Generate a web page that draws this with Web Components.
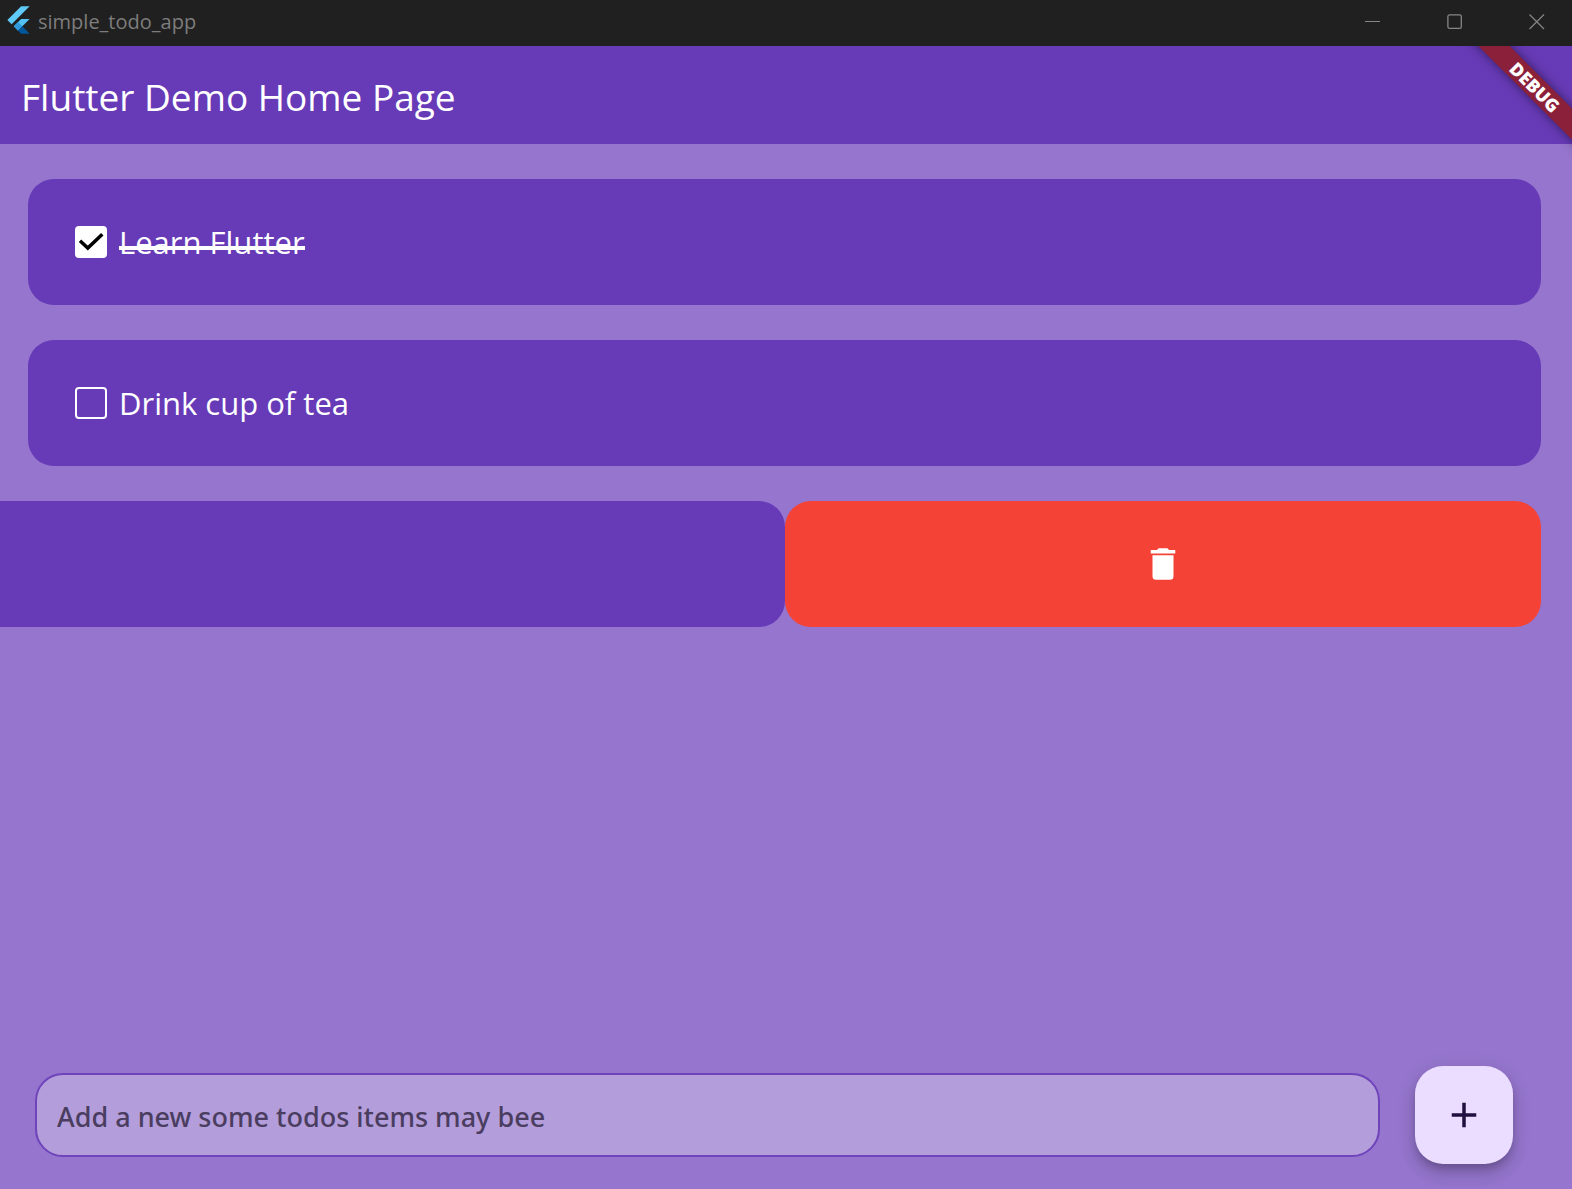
<!DOCTYPE html>
<html lang="en">
<head>
<meta charset="utf-8">
<title>simple_todo_app</title>
<style>
  html, body { height: 100%; margin: 0; }
  body {
    --deep: #673ab7;
    --light: #9575cd;
    --radius: 26px;
    font-family: "Open Sans", "Noto Sans", sans-serif;
    color: #fff;
    background: var(--light);
  }
</style>
</head>
<body>
<todo-window></todo-window>

<template id="title-bar">
  <style>
    :host { display: flex; align-items: center; height: 46px; flex: none; background: #202020; color: #7d7d7d; }
    .logo { width: 23px; height: 28px; margin: 0 8px 6px 7px; flex: none; }
    .name { flex: 1; font-size: 20px; line-height: 28px; padding-bottom: 3px; }
    nav { display: flex; margin-right: -6px; }
    button { display: grid; place-items: center; width: 82px; height: 43px; margin: 0 0 3px; padding: 0; border: 0; background: none; color: #868686; }
    svg { display: block; }
  </style>
  <svg class="logo" viewBox="2 0 20 24" aria-hidden="true">
    <path fill="#5fc9f8" d="M14.3 0 2.3 12 6 15.7 21.7 0z"/>
    <path fill="#54c1f5" d="M14.3 11.1 7.9 17.5l3.7 3.7L21.7 11.1z"/>
    <path fill="#2f9bdc" d="m7.9 17.5 3.7-3.7 3.7 3.7-3.7 3.8z"/>
    <path fill="#01579b" d="m11.6 21.3 3.7-3.8 6.4 6.5h-7.4z"/>
  </svg>
  <span class="name"><slot></slot></span>
  <nav>
    <button aria-label="Minimize"><svg width="16" height="16" viewBox="0 0 16 16"><path d="M0 7.500h15" stroke="currentColor"/></svg></button>
    <button aria-label="Maximize"><svg width="16" height="16" viewBox="0 0 16 16" fill="none"><rect x=".9" y=".9" width="13.4" height="13.4" rx="1.6" stroke="currentColor" stroke-width="1.3"/></svg></button>
    <button aria-label="Close"><svg width="16" height="16" viewBox="0 0 16 16"><path d="m.5.5 14.5 14.5M15 .5.5 15" stroke="currentColor" stroke-width="1.2"/></svg></button>
  </nav>
</template>

<template id="debug-ribbon">
  <style>
    :host { position: absolute; top: 0; right: 0; width: 120px; height: 120px; overflow: hidden; pointer-events: none; }
    span {
      position: absolute; right: -63px; top: 30px; width: 200px; height: 22px;
      transform: rotate(45deg); background: #8b203a; box-shadow: 0 0 11px rgba(0,0,0,.5);
      text-align: center; font-size: 18px; line-height: 22px; font-weight: 900;
      font-family: "Noto Sans", "Open Sans", sans-serif;
    }
  </style>
  <span><slot></slot></span>
</template>

<template id="app-header">
  <style>
    :host { display: flex; align-items: center; height: 98px; flex: none; padding: 0 21px; background: var(--deep); }
    h1 { margin: 0; padding-top: 4px; font-size: 37px; line-height: 50px; font-weight: 400; }
  </style>
  <h1><slot></slot></h1>
</template>

<template id="todo-item">
  <style>
    :host { display: flex; align-items: center; height: 126px; padding: 0 47px; box-sizing: border-box; border-radius: var(--radius); background: var(--deep); }
    label { display: flex; align-items: center; gap: 12px; font-size: 31px; line-height: 42px; }
    .box { display: grid; }
    .box > * { grid-area: 1 / 1; }
    input { appearance: none; width: 32px; height: 32px; margin: 0; border: 2px solid #fff; border-radius: 4px; }
    input:checked { background: #fff; }
    svg { width: 32px; height: 32px; visibility: hidden; pointer-events: none; }
    input:checked + svg { visibility: visible; }
    :host([done]) .text { background: linear-gradient(#fff, #fff) 0 25px / 100% 4px no-repeat; }
  </style>
  <label>
    <span class="box">
      <input type="checkbox">
      <svg viewBox="0 0 32 32" fill="none"><path d="M5 14.8 12.8 22 27.3 8.3" stroke="#000" stroke-width="3.5"/></svg>
    </span>
    <span class="text"><slot></slot></span>
  </label>
</template>

<template id="swiped-item">
  <style>
    :host { display: grid; grid-template-columns: 1fr 1fr; height: 126px; }
    .card { margin-left: -28px; border-radius: 0 var(--radius) var(--radius) 0; background: var(--deep); }
    button { display: grid; place-items: center; padding: 0; border: 0; border-radius: var(--radius); background: #f44336; color: #fff; }
    svg { width: 42px; height: 42px; display: block; }
  </style>
  <div class="card"></div>
  <button aria-label="Delete"><svg viewBox="0 0 24 24" fill="currentColor"><path d="M6 19a2 2 0 0 0 2 2h8a2 2 0 0 0 2-2V7H6zM19 4h-3.500l-1-1h-5l-1 1H5v2h14z"/></svg></button>
</template>

<template id="add-bar">
  <style>
    :host { display: flex; align-items: center; gap: 35px; padding: 0 59px 25px 35px; }
    input {
      flex: 1; min-width: 0; height: 84px; box-sizing: border-box; padding: 3px 20px 0;
      border: 2px solid #6f44bb; border-radius: 28px; background: #b39ddb;
      font: 500 27px/36px "Noto Sans", "Open Sans", sans-serif; color: #4a3d60; outline: 0;
    }
    input::placeholder { color: #4a3d60; opacity: 1; }
    button {
      display: grid; place-items: center; width: 98px; height: 98px; flex: none; padding: 0; border: 0;
      border-radius: 28px; background: #eaddff; color: #21103f;
      box-shadow: 0 5px 9px -2px rgba(0,0,0,.2), 0 10px 16px rgba(0,0,0,.14), 0 4px 24px rgba(0,0,0,.06);
    }
    svg { width: 42px; height: 42px; display: block; }
  </style>
  <input type="text" aria-label="New todo" placeholder="Add a new some todos items may bee">
  <button aria-label="Add"><svg viewBox="0 0 24 24" fill="currentColor"><path d="M19 13h-6v6h-2v-6H5v-2h6V5h2v6h6z"/></svg></button>
</template>

<template id="todo-window">
  <style>
    :host { display: flex; flex-direction: column; min-height: 100vh; overflow: hidden; }
    .app { position: relative; flex: 1; display: flex; flex-direction: column; background: var(--light); }
    main { flex: 1; display: flex; flex-direction: column; gap: 35px; padding: 35px 31px 35px 28px; }
  </style>
  <title-bar>simple_todo_app</title-bar>
  <div class="app">
    <app-header>Flutter Demo Home Page</app-header>
    <main>
      <todo-item done>Learn Flutter</todo-item>
      <todo-item>Drink cup of tea</todo-item>
      <swiped-item></swiped-item>
    </main>
    <add-bar></add-bar>
    <debug-ribbon>DEBUG</debug-ribbon>
  </div>
</template>

<script>
  class Part extends HTMLElement {
    constructor() {
      super();
      this.attachShadow({ mode: "open" })
        .append(document.getElementById(this.localName).content.cloneNode(true));
    }
  }
  class TitleBar extends Part {}
  class DebugRibbon extends Part {}
  class AppHeader extends Part {}
  class SwipedItem extends Part {}
  class AddBar extends Part {}
  class TodoWindow extends Part {}
  class TodoItem extends Part {
    connectedCallback() {
      const box = this.shadowRoot.querySelector("input");
      box.checked = this.hasAttribute("done");
      box.addEventListener("change", () => this.toggleAttribute("done", box.checked));
    }
  }
  customElements.define("title-bar", TitleBar);
  customElements.define("debug-ribbon", DebugRibbon);
  customElements.define("app-header", AppHeader);
  customElements.define("todo-item", TodoItem);
  customElements.define("swiped-item", SwipedItem);
  customElements.define("add-bar", AddBar);
  customElements.define("todo-window", TodoWindow);
</script>
</body>
</html>
